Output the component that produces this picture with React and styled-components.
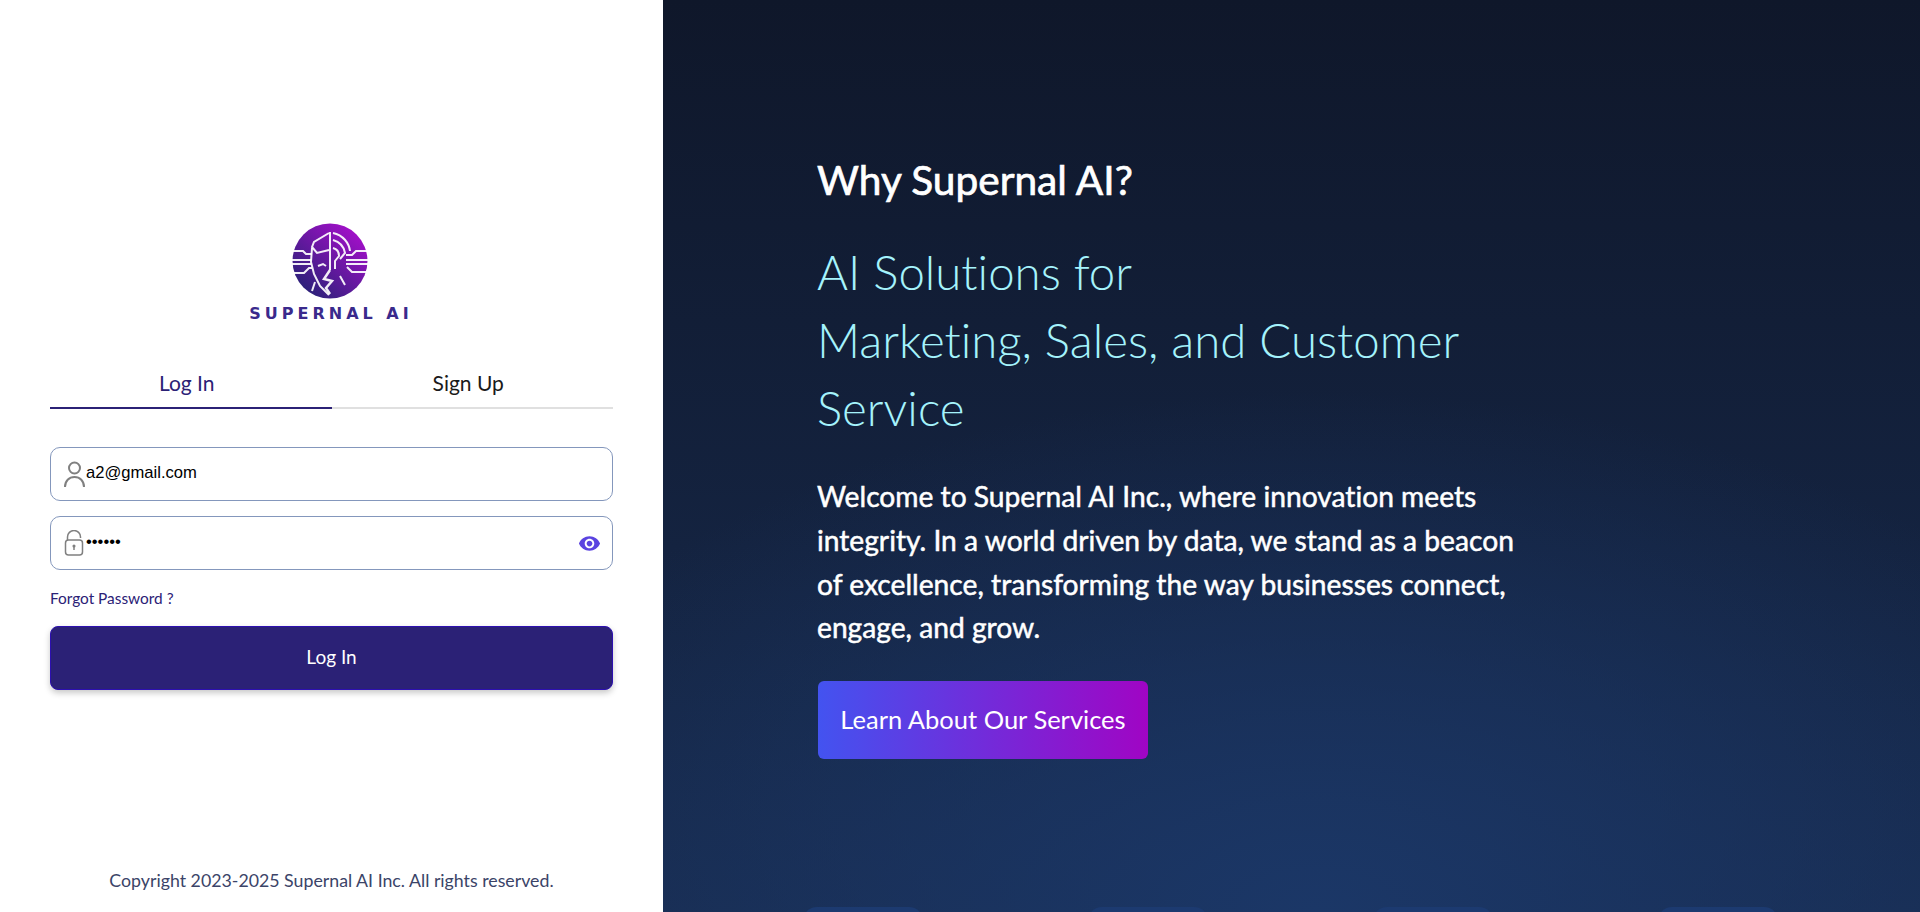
import styled, { createGlobalStyle } from 'styled-components'
import { MdVisibility } from 'react-icons/md'

const GlobalStyle = createGlobalStyle`
    html, body {
        margin: 0;
        padding: 0;
        height: 100%;
        background: #fff;
        font-family: 'Lato', 'Liberation Sans', sans-serif;
        font-variant-ligatures: none;
    }
`

const Page = styled.div`
    display: flex;
    width: 100%;
    height: 912px;
    overflow: hidden;
`

const LeftPanel = styled.div`
    width: 663px;
    flex-shrink: 0;
    padding: 222px 50px 0 50px;
    box-sizing: border-box;
    display: flex;
    flex-direction: column;
    background: #fff;
`

const LogoBox = styled.div`
    display: flex;
    flex-direction: column;
    align-items: center;
    height: 102px;
    padding-right: 4px;
`

const LogoText = styled.div`
    font-family: 'DejaVu Sans', sans-serif;
    font-size: 16px;
    line-height: 18px;
    font-weight: 700;
    letter-spacing: 4px;
    color: #3a2a8c;
    margin: 3px 0 0 3px;
    white-space: nowrap;
`

const Tabs = styled.div`
    display: flex;
    margin-top: 40px;
    border-bottom: 2px solid #e0e0e0;
`

const Tab = styled.div`
    flex: 1;
    height: 45px;
    line-height: 37px;
    padding-right: 8px;
    box-sizing: border-box;
    text-align: center;
    font-size: 21px;
    color: ${(p) => (p.$active ? '#2b2176' : '#1a1a1a')};
    margin-bottom: -2px;
    border-bottom: 2px solid ${(p) => (p.$active ? '#2b2176' : 'transparent')};
`

const Field = styled.div`
    display: flex;
    align-items: center;
    height: 54px;
    box-sizing: border-box;
    margin-top: ${(p) => p.$top}px;
    padding: 0 14px 0 13px;
    border: 1px solid #8497bc;
    border-radius: 10px;
    background: #fff;
`

const FieldIcon = styled.span`
    display: flex;
    width: 22px;
    height: 26px;
    flex-shrink: 0;
    color: #808080;
`

const FieldValue = styled.span`
    flex: 1;
    padding-bottom: 2px;
    font-family: 'Liberation Sans', Arial, sans-serif;
    font-size: 16.6px;
    color: #000;
`

const EyeButton = styled.span`
    display: flex;
    color: #5a43e0;
    margin-right: -3px;
    font-size: 23px;
`

const ForgotLink = styled.a`
    display: block;
    margin-top: 19px;
    font-size: 15.4px;
    line-height: 18px;
    color: #2b2176;
`

const SubmitButton = styled.button`
    display: block;
    width: 100%;
    height: 64px;
    margin-top: 19px;
    padding-bottom: 5px;
    border: 1px solid #2d10b0;
    border-radius: 8px;
    background: #2b2176;
    color: #fff;
    font-family: inherit;
    font-size: 19px;
    box-shadow: 0 3px 6px rgba(0, 0, 0, 0.22);
`

const Copyright = styled.div`
    margin-top: auto;
    margin-bottom: 21px;
    text-align: center;
    font-size: 17.75px;
    line-height: 22px;
    color: #3b4468;
`

const RightPanel = styled.div`
    position: relative;
    flex: 1;
    padding: 152px 0 0 154px;
    box-sizing: border-box;
    overflow: hidden;
    background:
        radial-gradient(ellipse 900px 520px at 52% 100%, #1b3767 0%, rgba(27, 55, 103, 0) 100%),
        linear-gradient(180deg, #0f172a 0%, #142340 60%, #182c50 100%);
`

const Heading = styled.h1`
    margin: 0;
    font-size: 40.6px;
    line-height: 56px;
    font-weight: 400;
    -webkit-text-stroke: 0.7px #fff;
    color: #fff;
`

const Subheading = styled.h2`
    margin: 30px 0 0 0;
    width: 680px;
    font-size: 47.4px;
    line-height: 68px;
    font-weight: 300;
    color: #a5f3fc;
`

const Lead = styled.p`
    margin: 33px 0 0 0;
    width: 720px;
    font-size: 28.2px;
    line-height: 43.8px;
    font-weight: 400;
    -webkit-text-stroke: 0.5px #fff;
    color: #fff;
`

const ServicesButton = styled.button`
    display: block;
    width: 330px;
    height: 78px;
    margin: 31px 0 0 1px;
    padding-bottom: 3px;
    border: 0;
    border-radius: 6px;
    background: linear-gradient(90deg, #4353f0 0%, #a005c4 100%);
    color: #fff;
    font-family: inherit;
    font-size: 25.5px;
`

const Glow = styled.span`
    position: absolute;
    bottom: -14px;
    left: ${(p) => p.$left}px;
    width: 120px;
    height: 19px;
    border-radius: 14px 14px 0 0;
    background: #1c3a70;
`

const LogoMark = () => (
    <svg width="80" height="80" viewBox="0 0 80 80">
        <defs>
            <linearGradient id="logoFill" x1="0.15" y1="0.9" x2="0.85" y2="0.1">
                <stop offset="0" stopColor="#2a2178" />
                <stop offset="1" stopColor="#a30fc9" />
            </linearGradient>
        </defs>
        <circle cx="40" cy="39" r="37.500" fill="url(#logoFill)" />
        <g fill="none" stroke="#fff" strokeWidth="2" strokeOpacity="0.92">
            <path d="M2 29h11l3 3h6M1.500 38h20M1.500 42h20M3 51h11l5-5h3" />
            <path d="M78 29H66l-4 4h-6M78.500 38H56M78.500 42H56M77 50H62l-5-5" />
            <path d="M39 11L24 20l-2 5 5 6 12-3" />
            <path d="M22 26l-1 14 3 12 6 12 9 9" />
            <path d="M40 10v38" />
            <path d="M43 11c10 2 16 10 17 18M43 18c7 2 11 7 12 13l-5 6M43 26c4 1 6 4 6 8l-4 5v8" />
            <path d="M50 54l5 9M25 60l-3 9" />
            <path d="M28 44l5-2 3 2" />
            <path d="M40 48l-6 9 8 2-6 7 4 6" strokeWidth="2.500" />
        </g>
    </svg>
)

const UserIcon = () => (
    <svg width="22" height="26" viewBox="0 0 22 26" fill="none" stroke="currentColor" strokeWidth="2">
        <circle cx="10.500" cy="7" r="5.500" />
        <path d="M1 26c0-6 4-10 9.500-10S20 20 20 26" />
    </svg>
)

const LockIcon = () => (
    <svg width="22" height="26" viewBox="0 0 22 26" fill="none" stroke="currentColor" strokeWidth="1.500">
        <path d="M3.500 10V7a6.500 6.500 0 0 1 13 0v1" />
        <rect x="1.500" y="10" width="17" height="15" rx="3" />
        <path d="M10 17v3" />
        <circle cx="10" cy="16" r="0.800" fill="currentColor" />
    </svg>
)

const App = () => {
    return (
        <Page>
            <GlobalStyle />
            <LeftPanel>
                <LogoBox>
                    <LogoMark />
                    <LogoText>SUPERNAL AI</LogoText>
                </LogoBox>
                <Tabs>
                    <Tab $active>Log In</Tab>
                    <Tab>Sign Up</Tab>
                </Tabs>
                <Field $top={38}>
                    <FieldIcon>
                        <UserIcon />
                    </FieldIcon>
                    <FieldValue>a2@gmail.com</FieldValue>
                </Field>
                <Field $top={15}>
                    <FieldIcon>
                        <LockIcon />
                    </FieldIcon>
                    <FieldValue>••••••</FieldValue>
                    <EyeButton>
                        <MdVisibility />
                    </EyeButton>
                </Field>
                <ForgotLink>Forgot Password ?</ForgotLink>
                <SubmitButton>Log In</SubmitButton>
                <Copyright>Copyright 2023-2025 Supernal AI Inc. All rights reserved.</Copyright>
            </LeftPanel>
            <RightPanel>
                <Heading>Why Supernal AI?</Heading>
                <Subheading>
                    AI Solutions for
                    <br />
                    Marketing, Sales, and Customer Service
                </Subheading>
                <Lead>
                    Welcome to Supernal AI Inc., where innovation meets integrity. In a world driven by data, we
                    stand as a beacon of excellence, transforming the way businesses connect, engage, and grow.
                </Lead>
                <ServicesButton>Learn About Our Services</ServicesButton>
                <Glow $left={140} />
                <Glow $left={425} />
                <Glow $left={710} />
                <Glow $left={995} />
            </RightPanel>
        </Page>
    )
}

export default App
